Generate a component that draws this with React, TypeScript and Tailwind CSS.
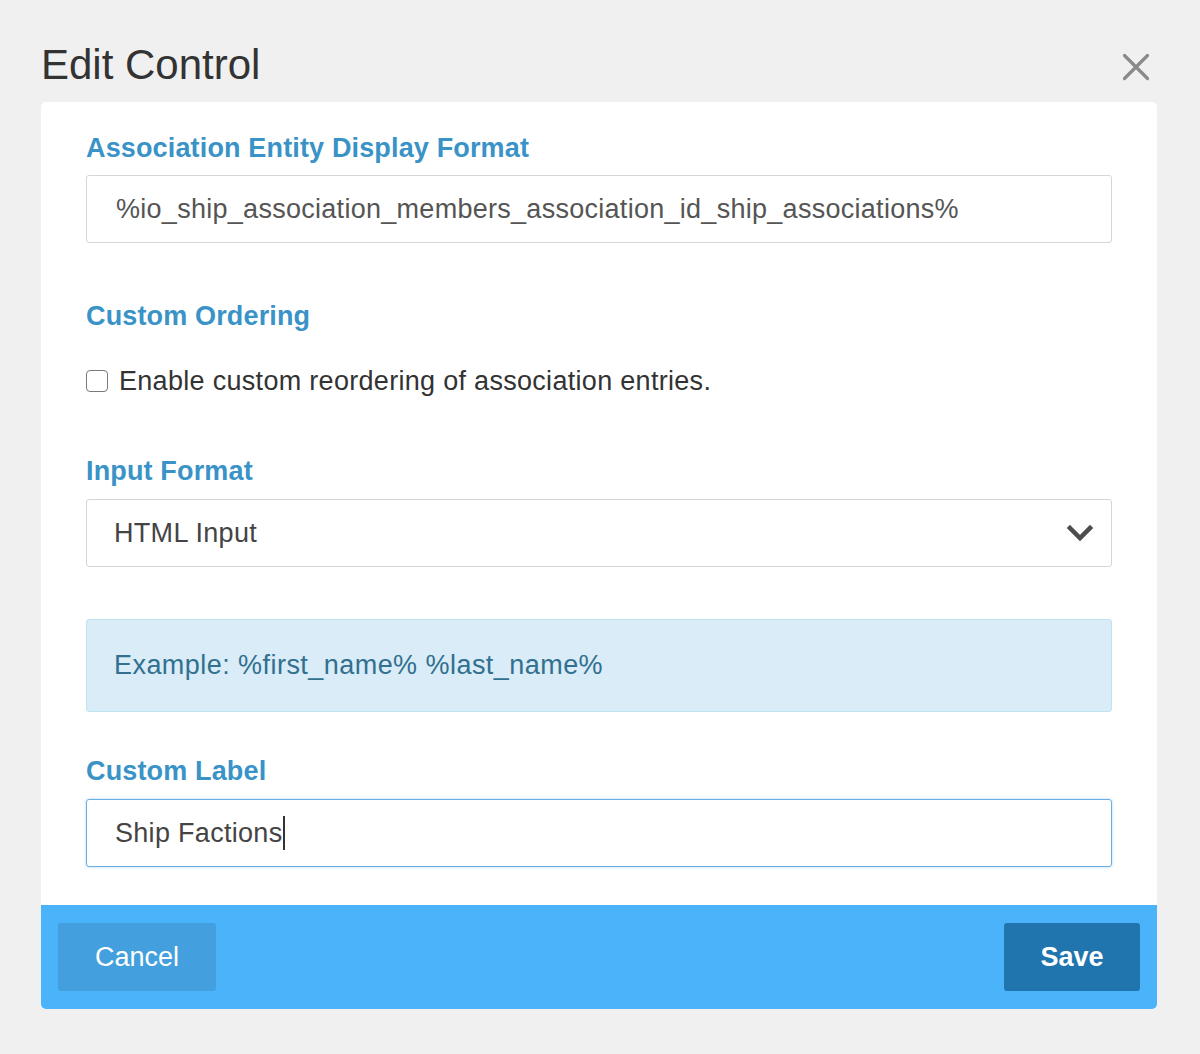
import React from "react";

const font = { fontFamily: '"Liberation Sans", Arial, Helvetica, sans-serif' };

function Label({ children, className = "" }: { children: React.ReactNode; className?: string }) {
  return (
    <div className={`text-[27px] leading-[32px] font-bold tracking-[0.15px] text-[#3a93c7] ${className}`}>{children}</div>
  );
}

export default function App() {
  return (
    <div className="min-h-screen w-full bg-[#f0f0f0] pt-[41px]" style={font}>
      <div className="ml-[41px] w-[1116px]">
        <div className="flex items-center justify-between">
          <h1 className="text-[42px] leading-[48px] font-normal text-[#333333]">Edit Control</h1>
          <svg width="30" height="30" viewBox="0 0 30 30" className="mr-[6px] mt-[3px]">
            <path d="M3.5 3.5 L26.5 26.5 M26.5 3.5 L3.5 26.5" stroke="#8a8a8a" strokeWidth="3.2" strokeLinecap="round" fill="none" />
          </svg>
        </div>

        <div className="mt-[13px] rounded-[5px] bg-white overflow-hidden">
          <div className="px-[45px] pt-[30px] pb-[38px]">
            <Label>Association Entity Display Format</Label>
            <div className="mt-[11px] h-[68px] rounded-[3px] border border-[#d6d6d6] pl-[29px] flex items-center text-[27px] tracking-[0.28px] text-[#555555]">
              %io_ship_association_members_association_id_ship_associations%
            </div>

            <Label className="mt-[57px]">Custom Ordering</Label>
            <div className="mt-[33px] h-[32px] flex items-center">
              <div className="w-[22px] h-[22px] rounded-[4px] border-[1.5px] border-[#7a7a7a] bg-white" />
              <span className="ml-[11px] text-[27px] leading-[32px] tracking-[0.3px] text-[#333333]">
                Enable custom reordering of association entries.
              </span>
            </div>

            <Label className="mt-[58px]">Input Format</Label>
            <div className="mt-[12px] h-[68px] rounded-[3px] border border-[#d6d6d6] pl-[27px] pr-[18px] flex items-center justify-between text-[27px] tracking-[0.3px] text-[#444444]">
              <span>HTML Input</span>
              <svg width="26" height="18" viewBox="0 0 26 18">
                <path d="M3 4 L13 14 L23 4" stroke="#4d4d4d" strokeWidth="4.5" fill="none" strokeLinecap="square" />
              </svg>
            </div>

            <div className="mt-[52px] h-[93px] rounded-[3px] border border-[#bde4f0] bg-[#d9ecf7] pl-[27px] flex items-center text-[27px] tracking-[0.45px] text-[#31708f]">
              Example: %first_name% %last_name%
            </div>

            <Label className="mt-[43px]">Custom Label</Label>
            <div className="mt-[12px] h-[68px] rounded-[3px] border-[1.5px] border-[#6aaee6] shadow-[0_0_3px_rgba(102,175,233,0.5)] pl-[28px] flex items-center text-[27px] tracking-[0.3px] text-[#444444]">
              <span>Ship Factions</span>
              <span className="ml-[1px] w-[1.5px] h-[34px] bg-[#333333]" />
            </div>
          </div>

          <div className="h-[104px] bg-[#4ab3fa] px-[17px] flex items-center justify-between">
            <button className="w-[158px] h-[68px] rounded-[3px] bg-[#439fdd] text-white text-[27px] font-normal">
              Cancel
            </button>
            <button className="w-[136px] h-[68px] rounded-[3px] bg-[#2175ae] text-white text-[27px] font-bold">
              Save
            </button>
          </div>
        </div>
      </div>
    </div>
  );
}
